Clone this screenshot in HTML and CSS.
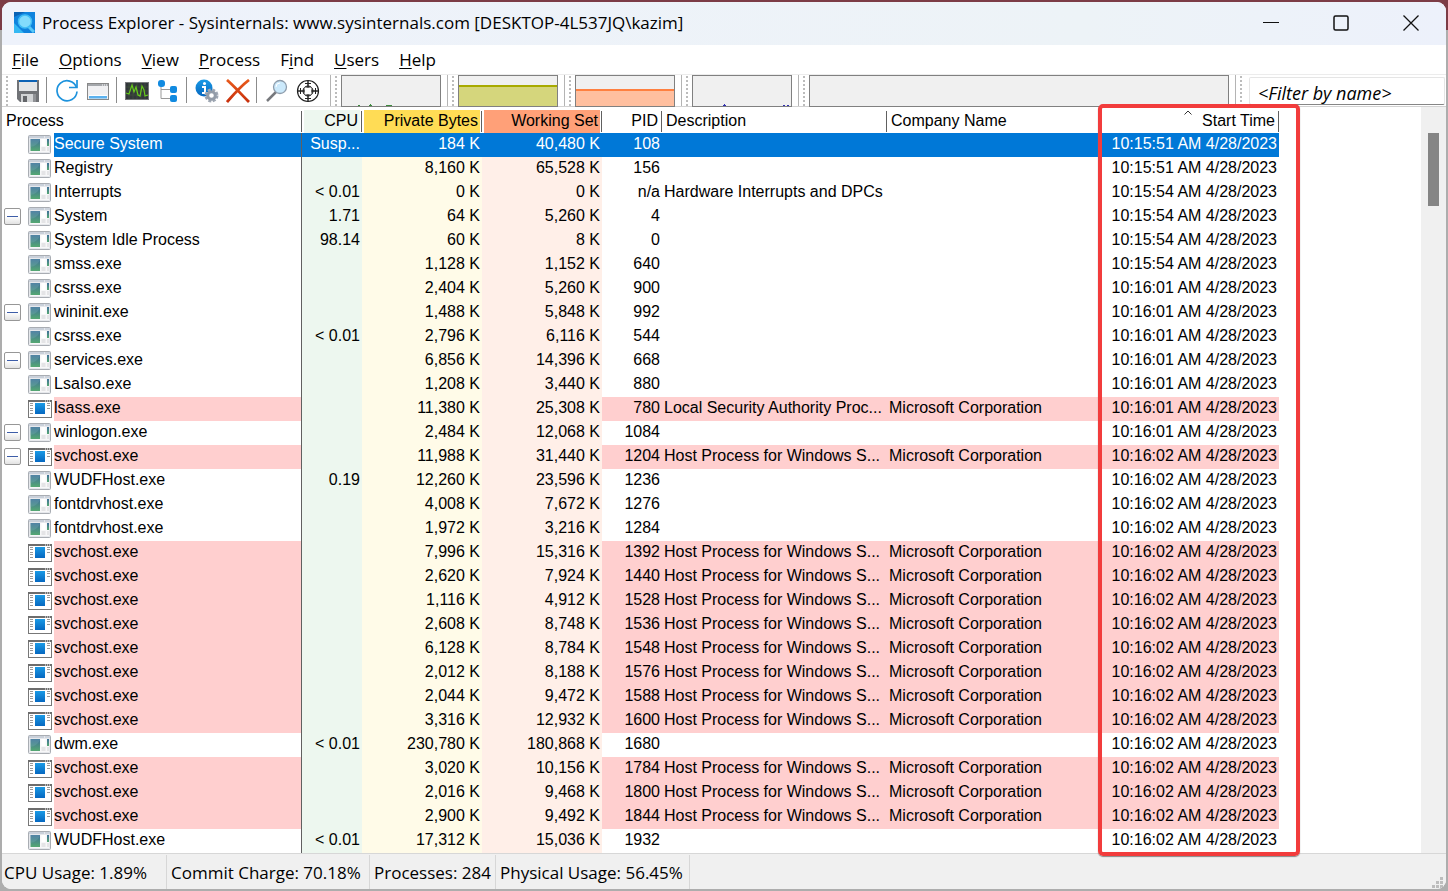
FILE: index.html
```html
<!DOCTYPE html>
<html lang="en">
<head>
<meta charset="utf-8">
<title>Process Explorer</title>
<link rel="stylesheet" href="styles.css">
</head>
<body>
<svg class="defs" aria-hidden="true">
  <defs>
    <linearGradient id="teal" x1="0" y1="0" x2="0" y2="1"><stop offset="0" stop-color="#3f6f9c"/><stop offset="1" stop-color="#55a872"/></linearGradient>
    <linearGradient id="blue" x1="0" y1="0" x2="0" y2="1"><stop offset="0" stop-color="#1a9ae6"/><stop offset="1" stop-color="#0668c0"/></linearGradient>
    <linearGradient id="red" x1="0" y1="0" x2="0" y2="1"><stop offset="0" stop-color="#e85a1c"/><stop offset="1" stop-color="#c8300c"/></linearGradient>
  </defs>
  <symbol id="app" viewBox="0 0 24 19">
    <rect x=".5" y=".5" width="22" height="18" rx="1" fill="#e6e8ec" stroke="#a9adb3"/>
    <path d="M1 2h15" stroke="#c9d0da" stroke-width="2"/><path d="M17 2h5" stroke="#b4bfce" stroke-width="1"/>
    <rect x="2" y="4" width="19" height="13" fill="#f7f7f8"/>
    <rect x="2.500" y="4" width="9.500" height="12" fill="url(#teal)"/>
    <path d="M2.500 12Q9 11 12 5V4H2.500Z" fill="#7bb0b8" opacity=".3"/>
    <rect x="13.500" y="4" width="4" height="7" fill="#fff"/><rect x="13.500" y="12" width="4" height="4" fill="#e4e4e6"/>
    <rect x="19" y="4" width="2" height="7" fill="url(#teal)"/><rect x="19" y="12" width="2" height="4" fill="#e4e4e6"/>
  </symbol>
  <symbol id="svc" viewBox="0 0 24 19">
    <rect x=".5" y="1.500" width="23" height="17" fill="#fff" stroke="#777"/>
    <path d="M0 2h24" stroke="#6d6d6d" stroke-width="2"/><path d="M17 2h1M19 2h1M21 2h1" stroke="#fff"/>
    <rect x="7" y="4" width="10" height="11" fill="url(#blue)"/>
    <path d="M2 4.500h3M2 6.500h3M2 9.500h3M2 11.500h3M2 14.500h3M19 4.500h3M19 6.500h3M19 9.500h3" stroke="#999"/>
  </symbol>
</svg>
<div class="window">
  <header class="titlebar">
    <svg class="logo" viewBox="0 0 21 21"><rect width="21" height="21" fill="#0f83dd"/><path d="M0 5 11 0H0Z" fill="#0a62b4"/><path d="M0 21V11l10 10Z" fill="#35b8f3"/><path d="m14 14 6 6" stroke="#58c8f8" stroke-width="3"/><circle cx="11" cy="9.500" r="6.500" fill="#83dcfc" stroke="#41bdf5" stroke-width="1.500"/></svg>
    <h1 class="title">Process Explorer - Sysinternals: www.sysinternals.com [DESKTOP-4L537JQ\kazim]</h1>
    <div class="controls">
      <button aria-label="Minimize"><svg viewBox="0 0 16 16"><path d="M0 7.500h16" stroke="#111"/></svg></button>
      <button aria-label="Maximize"><svg viewBox="0 0 16 16"><rect x="1" y="1" width="14" height="14" rx="1.500" fill="none" stroke="#111" stroke-width="1.500"/></svg></button>
      <button aria-label="Close"><svg viewBox="0 0 16 16"><path d="m.5.5 15 15m0-15-15 15" stroke="#111" stroke-width="1.300"/></svg></button>
    </div>
  </header>
  <nav class="menu">
    <button><u>F</u>ile</button><button><u>O</u>ptions</button><button><u>V</u>iew</button><button><u>P</u>rocess</button><button>F<u>i</u>nd</button><button><u>U</u>sers</button><button><u>H</u>elp</button>
  </nav>
  <div class="toolbar">
    <div class="band tools">
      <i class="grip"></i>
      <button aria-label="Save"><svg viewBox="0 0 24 24"><path d="M1 1h22v22H4l-3-3Z" fill="#717377"/><rect x="3" y="1" width="18" height="11" fill="#e3e5e7"/><rect x="3" y="1" width="18" height="2" fill="#0b62b5"/><path d="M5 15h15v8H5Z" fill="#d2d4d6"/><path d="M7 17h4v6H7Z" fill="#64666a"/><path d="M17 15h3v8h-3Z" fill="#909296"/></svg></button><i class="sep"></i>
      <button aria-label="Refresh"><svg viewBox="0 0 24 24"><path d="M21.500 8.500A10 10 0 1 0 22 12.500" fill="none" stroke="#1e93dd" stroke-width="1.700"/><path d="M22 1v7.500h-8" fill="none" stroke="#1e93dd" stroke-width="1.700"/></svg></button>
      <button aria-label="System information"><svg viewBox="0 0 24 24"><rect x="1.500" y="4.500" width="21" height="16" fill="#f0f0f2" stroke="#888"/><path d="M2 6h20" stroke="#a4a7ab" stroke-width="2"/><path d="M16 6h1m1 0h1m1 0h1" stroke="#fff"/><rect x="3" y="17" width="18" height="2.500" fill="#5bb1ee"/><path d="M3 16.500h18" stroke="#fff"/></svg></button><i class="sep"></i>
      <button aria-label="Process graph"><svg viewBox="0 0 24 24"><rect x=".5" y="3.500" width="23" height="17" fill="#32363b" stroke="#77797b"/><path d="M4 4v16M8 4v16M12 4v16M16 4v16M20 4v16M1 8h22M1 12h22M1 16h22" stroke="#41553a" stroke-width=".7"/><path d="m1 14 3 1 3-9 2 7 2-5 2 8 2 1 2-10 2 4 1 6 3-1" fill="none" stroke="#66c91c" stroke-width="1.200"/></svg></button>
      <button aria-label="Show process tree"><svg viewBox="0 0 24 24"><path d="M5 5v14.500h11M5 10.500h11" fill="none" stroke="#999"/><rect x="2" y="1" width="7" height="7" rx="3" fill="#118ae0"/><rect x="14" y="7" width="7" height="7" rx="2" fill="#118ae0"/><rect x="14" y="16" width="7" height="7" rx="2" fill="#118ae0"/></svg></button><i class="sep"></i>
      <button aria-label="Properties"><svg viewBox="0 0 24 24"><circle cx="9" cy="9" r="8.500" fill="url(#blue)"/><path d="M7 8h3v6M7 14h6" fill="none" stroke="#fff" stroke-width="2"/><circle cx="9.500" cy="4.500" r="1.500" fill="#fff"/><circle cx="16.500" cy="16.500" r="5" fill="none" stroke="#a0a8b4" stroke-width="4" stroke-dasharray="2.600 1.327"/><circle cx="16.500" cy="16.500" r="3.800" fill="#fff" stroke="#939ca8" stroke-width="3"/></svg></button>
      <button aria-label="Kill process"><svg viewBox="0 0 24 24"><path d="M1 1c7 6 14 14 22 22M23 1C15 7 8 15 1 23" stroke="url(#red)" stroke-width="2.800" fill="none"/></svg></button><i class="sep"></i>
      <button aria-label="Find handle"><svg viewBox="0 0 24 24"><path d="m11 13-9 9" stroke="#77797d" stroke-width="2.500"/><circle cx="15" cy="8" r="6.500" fill="#cbe9fb" stroke="#8e9dac" stroke-width="1.300"/><path d="M11 8q0-4 4-4" stroke="#fff" fill="none"/></svg></button>
      <button aria-label="Find window"><svg viewBox="0 0 24 24"><g fill="none" stroke="#222"><circle cx="12" cy="12" r="10.500" stroke-width="1.200"/><circle cx="12" cy="12" r="5" stroke-width="1"/><path d="M12 1.500v7M12 15.500v7M1.500 12h7M15.500 12h7" stroke-width="1.500"/><path d="M9 4.500h6M9.500 8h5M9 19.500h6M9.500 16h5M4.500 9v6M8 9.500v5M19.500 9v6M16 9.500v5"/></g></svg></button>
    </div>
    <div class="band"><i class="grip"></i><svg class="graph" viewBox="0 0 98 30"><path d="M16 29.500h2M27 29.500h3M28 28.500h1M44 29.500h6" stroke="#3c8a3c"/></svg></div>
    <div class="band"><i class="grip"></i><div class="graph commit"></div></div>
    <div class="band"><i class="grip"></i><div class="graph memory"></div></div>
    <div class="band"><i class="grip"></i><svg class="graph" viewBox="0 0 98 30"><path d="M30 29.500h3M31 28.500h1M90 29.500h2M94 29.500h2" stroke="#3030b0"/></svg></div>
    <div class="band wide"><i class="grip"></i><div class="graph"></div></div>
    <div class="band filter"><i class="grip"></i><input type="text" aria-label="Filter by name" placeholder="&lt;Filter by name&gt;"></div>
  </div>
  <main class="main">
    <div class="list">
      <table>
        <colgroup><col class="c-name"><col class="c-cpu"><col class="c-mem"><col class="c-mem"><col class="c-pid"><col class="c-desc"><col class="c-comp"><col class="c-start"></colgroup>
        <thead><tr><th><span>Process</span></th><th class="cpu"><span>CPU</span></th><th class="pb"><span>Private Bytes</span></th><th class="ws"><span>Working Set</span></th><th class="num"><span>PID</span></th><th><span>Description</span></th><th class="plain"><span>Company Name</span></th><th class="num sorted" aria-sort="ascending"><svg viewBox="0 0 8 5"><path d="m.5 4.500 3.500-3.500 3.500 3.500" fill="none" stroke="#333"/></svg><span>Start Time</span></th></tr></thead>
        <tbody>
<tr class="sel"><td><div class="proc"><svg><use href="#app"/></svg><span>Secure System</span></div></td><td>Susp...</td><td>184 K</td><td>40,480 K</td><td>108</td><td></td><td></td><td>10:15:51 AM 4/28/2023</td></tr>
<tr><td><div class="proc"><svg><use href="#app"/></svg><span>Registry</span></div></td><td></td><td>8,160 K</td><td>65,528 K</td><td>156</td><td></td><td></td><td>10:15:51 AM 4/28/2023</td></tr>
<tr><td><div class="proc"><svg><use href="#app"/></svg><span>Interrupts</span></div></td><td>&lt; 0.01</td><td>0 K</td><td>0 K</td><td>n/a</td><td>Hardware Interrupts and DPCs</td><td></td><td>10:15:54 AM 4/28/2023</td></tr>
<tr><td><div class="proc"><button aria-label="Collapse"></button><svg><use href="#app"/></svg><span>System</span></div></td><td>1.71</td><td>64 K</td><td>5,260 K</td><td>4</td><td></td><td></td><td>10:15:54 AM 4/28/2023</td></tr>
<tr><td><div class="proc"><svg><use href="#app"/></svg><span>System Idle Process</span></div></td><td>98.14</td><td>60 K</td><td>8 K</td><td>0</td><td></td><td></td><td>10:15:54 AM 4/28/2023</td></tr>
<tr><td><div class="proc"><svg><use href="#app"/></svg><span>smss.exe</span></div></td><td></td><td>1,128 K</td><td>1,152 K</td><td>640</td><td></td><td></td><td>10:15:54 AM 4/28/2023</td></tr>
<tr><td><div class="proc"><svg><use href="#app"/></svg><span>csrss.exe</span></div></td><td></td><td>2,404 K</td><td>5,260 K</td><td>900</td><td></td><td></td><td>10:16:01 AM 4/28/2023</td></tr>
<tr><td><div class="proc"><button aria-label="Collapse"></button><svg><use href="#app"/></svg><span>wininit.exe</span></div></td><td></td><td>1,488 K</td><td>5,848 K</td><td>992</td><td></td><td></td><td>10:16:01 AM 4/28/2023</td></tr>
<tr><td><div class="proc"><svg><use href="#app"/></svg><span>csrss.exe</span></div></td><td>&lt; 0.01</td><td>2,796 K</td><td>6,116 K</td><td>544</td><td></td><td></td><td>10:16:01 AM 4/28/2023</td></tr>
<tr><td><div class="proc"><button aria-label="Collapse"></button><svg><use href="#app"/></svg><span>services.exe</span></div></td><td></td><td>6,856 K</td><td>14,396 K</td><td>668</td><td></td><td></td><td>10:16:01 AM 4/28/2023</td></tr>
<tr><td><div class="proc"><svg><use href="#app"/></svg><span>LsaIso.exe</span></div></td><td></td><td>1,208 K</td><td>3,440 K</td><td>880</td><td></td><td></td><td>10:16:01 AM 4/28/2023</td></tr>
<tr class="svc"><td><div class="proc"><svg><use href="#svc"/></svg><span>lsass.exe</span></div></td><td></td><td>11,380 K</td><td>25,308 K</td><td>780</td><td>Local Security Authority Proc...</td><td>Microsoft Corporation</td><td>10:16:01 AM 4/28/2023</td></tr>
<tr><td><div class="proc"><button aria-label="Collapse"></button><svg><use href="#app"/></svg><span>winlogon.exe</span></div></td><td></td><td>2,484 K</td><td>12,068 K</td><td>1084</td><td></td><td></td><td>10:16:01 AM 4/28/2023</td></tr>
<tr class="svc"><td><div class="proc"><button aria-label="Collapse"></button><svg><use href="#svc"/></svg><span>svchost.exe</span></div></td><td></td><td>11,988 K</td><td>31,440 K</td><td>1204</td><td>Host Process for Windows S...</td><td>Microsoft Corporation</td><td>10:16:02 AM 4/28/2023</td></tr>
<tr><td><div class="proc"><svg><use href="#app"/></svg><span>WUDFHost.exe</span></div></td><td>0.19</td><td>12,260 K</td><td>23,596 K</td><td>1236</td><td></td><td></td><td>10:16:02 AM 4/28/2023</td></tr>
<tr><td><div class="proc"><svg><use href="#app"/></svg><span>fontdrvhost.exe</span></div></td><td></td><td>4,008 K</td><td>7,672 K</td><td>1276</td><td></td><td></td><td>10:16:02 AM 4/28/2023</td></tr>
<tr><td><div class="proc"><svg><use href="#app"/></svg><span>fontdrvhost.exe</span></div></td><td></td><td>1,972 K</td><td>3,216 K</td><td>1284</td><td></td><td></td><td>10:16:02 AM 4/28/2023</td></tr>
<tr class="svc"><td><div class="proc"><svg><use href="#svc"/></svg><span>svchost.exe</span></div></td><td></td><td>7,996 K</td><td>15,316 K</td><td>1392</td><td>Host Process for Windows S...</td><td>Microsoft Corporation</td><td>10:16:02 AM 4/28/2023</td></tr>
<tr class="svc"><td><div class="proc"><svg><use href="#svc"/></svg><span>svchost.exe</span></div></td><td></td><td>2,620 K</td><td>7,924 K</td><td>1440</td><td>Host Process for Windows S...</td><td>Microsoft Corporation</td><td>10:16:02 AM 4/28/2023</td></tr>
<tr class="svc"><td><div class="proc"><svg><use href="#svc"/></svg><span>svchost.exe</span></div></td><td></td><td>1,116 K</td><td>4,912 K</td><td>1528</td><td>Host Process for Windows S...</td><td>Microsoft Corporation</td><td>10:16:02 AM 4/28/2023</td></tr>
<tr class="svc"><td><div class="proc"><svg><use href="#svc"/></svg><span>svchost.exe</span></div></td><td></td><td>2,608 K</td><td>8,748 K</td><td>1536</td><td>Host Process for Windows S...</td><td>Microsoft Corporation</td><td>10:16:02 AM 4/28/2023</td></tr>
<tr class="svc"><td><div class="proc"><svg><use href="#svc"/></svg><span>svchost.exe</span></div></td><td></td><td>6,128 K</td><td>8,784 K</td><td>1548</td><td>Host Process for Windows S...</td><td>Microsoft Corporation</td><td>10:16:02 AM 4/28/2023</td></tr>
<tr class="svc"><td><div class="proc"><svg><use href="#svc"/></svg><span>svchost.exe</span></div></td><td></td><td>2,012 K</td><td>8,188 K</td><td>1576</td><td>Host Process for Windows S...</td><td>Microsoft Corporation</td><td>10:16:02 AM 4/28/2023</td></tr>
<tr class="svc"><td><div class="proc"><svg><use href="#svc"/></svg><span>svchost.exe</span></div></td><td></td><td>2,044 K</td><td>9,472 K</td><td>1588</td><td>Host Process for Windows S...</td><td>Microsoft Corporation</td><td>10:16:02 AM 4/28/2023</td></tr>
<tr class="svc"><td><div class="proc"><svg><use href="#svc"/></svg><span>svchost.exe</span></div></td><td></td><td>3,316 K</td><td>12,932 K</td><td>1600</td><td>Host Process for Windows S...</td><td>Microsoft Corporation</td><td>10:16:02 AM 4/28/2023</td></tr>
<tr><td><div class="proc"><svg><use href="#app"/></svg><span>dwm.exe</span></div></td><td>&lt; 0.01</td><td>230,780 K</td><td>180,868 K</td><td>1680</td><td></td><td></td><td>10:16:02 AM 4/28/2023</td></tr>
<tr class="svc"><td><div class="proc"><svg><use href="#svc"/></svg><span>svchost.exe</span></div></td><td></td><td>3,020 K</td><td>10,156 K</td><td>1784</td><td>Host Process for Windows S...</td><td>Microsoft Corporation</td><td>10:16:02 AM 4/28/2023</td></tr>
<tr class="svc"><td><div class="proc"><svg><use href="#svc"/></svg><span>svchost.exe</span></div></td><td></td><td>2,016 K</td><td>9,468 K</td><td>1800</td><td>Host Process for Windows S...</td><td>Microsoft Corporation</td><td>10:16:02 AM 4/28/2023</td></tr>
<tr class="svc"><td><div class="proc"><svg><use href="#svc"/></svg><span>svchost.exe</span></div></td><td></td><td>2,900 K</td><td>9,492 K</td><td>1844</td><td>Host Process for Windows S...</td><td>Microsoft Corporation</td><td>10:16:02 AM 4/28/2023</td></tr>
<tr><td><div class="proc"><svg><use href="#app"/></svg><span>WUDFHost.exe</span></div></td><td>&lt; 0.01</td><td>17,312 K</td><td>15,036 K</td><td>1932</td><td></td><td></td><td>10:16:02 AM 4/28/2023</td></tr>
        </tbody>
      </table>
    </div>
    <div class="scrollbar"><div class="thumb"></div></div>
    <div class="highlight"></div>
  </main>
  <footer class="status">
    <span class="s-cpu">CPU Usage: 1.89%</span><span class="s-commit">Commit Charge: 70.18%</span><span class="s-proc">Processes: 284</span><span class="s-phys">Physical Usage: 56.45%</span>
    <svg class="resize" viewBox="0 0 12 12"><path d="M8 0h3v3H8zM4 4h3v3H4zM8 4h3v3H8zM0 8h3v3H0zM4 8h3v3H4zM8 8h3v3H8z" fill="#bdbdbd"/></svg>
  </footer>
</div>
</body>
</html>
```
FILE: styles.css
```css
* { box-sizing: border-box; }
body {
  margin: 0;
  height: 100vh;
  padding: 2px;
  background: linear-gradient(#7c3c46 30px, #adadad 30px);
  font: 17px/24px "Open Sans", "Noto Sans", sans-serif;
  color: #000;
}
button { padding: 0; border: 0; background: none; font: inherit; color: inherit; }
svg { display: block; flex: none; }
.defs { position: absolute; width: 0; height: 0; }
.window {
  display: flex;
  flex-direction: column;
  height: 100%;
  background: #fff;
  border-radius: 9px;
  overflow: hidden;
}
.titlebar {
  display: flex;
  align-items: center;
  height: 43px;
  flex: none;
  padding: 0 0 2px 12px;
  background: linear-gradient(90deg, #eef2fb, #edf3f7 75%, #edf1fb);
}
.logo { width: 21px; height: 21px; }
.title { margin: 0 auto 0 7px; font: inherit; white-space: nowrap; }
.controls { display: flex; }
.controls button { display: grid; place-items: center; width: 70px; height: 40px; }
.controls svg { width: 16px; height: 16px; }
.menu { display: flex; gap: 20px; height: 29px; flex: none; padding: 3px 10px 2px; }
.menu u { text-underline-offset: 2px; text-decoration-thickness: 1px; }

.toolbar {
  display: flex;
  height: 33px;
  flex: none;
  border-top: 1px solid #ececec;
  border-bottom: 1px solid #d2d2d2;
}
.band { display: flex; flex: none; padding: 0 6px 0 4px; border-right: 1px solid #b4b4b4; }
.band + .band { width: 117px; }
.grip {
  flex: none;
  width: 2px;
  margin: 1px 4px 0 0;
  background: repeating-linear-gradient(#bcbcbc 0 2px, transparent 2px 4px);
}
.tools { width: 329px; }
.tools button { display: grid; place-items: center; flex: none; width: 31px; height: 31px; }
.tools svg { width: 24px; height: 24px; }
.sep { flex: none; width: 1px; height: 26px; margin: 2px 4px 0 3px; background: #8c8c8c; }
.graph { flex: 1; height: 32px; border: 1px solid #808080; background: #f0f0f0; }
.commit { background: linear-gradient(#f0f0f0 9px, #a8aa00 9px 11px, #d5d67c 11px); }
.memory { background: linear-gradient(#f0f0f0 13px, #ff8040 13px 15px, #ffbf9f 15px); }
.toolbar .wide { flex: 1; }
.toolbar .filter { width: 210px; padding: 0 1px 0 4px; border: 0; }
.filter input {
  flex: 1;
  min-width: 0;
  height: 28px;
  margin: 2px 0 0 3px;
  padding: 3px 8px 0;
  border: 1px solid #e5e5e5;
  border-bottom-color: #868686;
  border-radius: 2px;
  outline: 0;
  font: italic 18px/24px "Open Sans", "Noto Sans", sans-serif;
}
.filter input::placeholder { color: #000; opacity: 1; }

.main { position: relative; display: flex; flex: 1; min-height: 0; font: 16px/22px "Liberation Sans", Arial, sans-serif; }
.list { flex: 1; min-width: 0; overflow: hidden; }
table { width: 1277px; table-layout: fixed; border-collapse: separate; border-spacing: 0; }
.c-name { width: 300px; }
.c-cpu, .c-pid { width: 60px; }
.c-mem { width: 120px; }
.c-desc { width: 225px; }
.c-comp { width: 212px; }
.c-start { width: 180px; }
th { position: relative; height: 26px; padding: 3px 2px 0; font-weight: 400; text-align: left; vertical-align: top; }
th span { display: block; height: 23px; padding: 0 2px; }
th::after { content: ""; position: absolute; top: 4px; right: 0; bottom: 1px; width: 1px; background: #606060; }
.plain::after { display: none; }
.cpu, .pb, .ws, .num { text-align: right; }
.cpu span { background: #edf7ef; }
.pb span { background: #ffdc55; }
.ws span { background: #ffa078; }
.sorted svg { position: absolute; top: 3px; left: 85px; width: 8px; height: 5px; }
td { height: 24px; padding: 0 2px; text-align: right; vertical-align: top; white-space: nowrap; overflow: hidden; }
td:nth-child(1) { padding: 0; border-right: 1px solid #606060; }
td:nth-child(2) { background: #edf7ef; }
td:nth-child(3) { background: #fffbe8; }
td:nth-child(4) { background: #ffefe8; }
td:nth-child(6), td:nth-child(7) { text-align: left; }
.proc { display: flex; justify-content: flex-end; height: 24px; text-align: left; }
.proc svg { width: 24px; height: 19px; margin: 2px 2px 0 0; }
.proc span { width: 247px; }
.proc button {
  width: 17px;
  height: 17px;
  margin: 3px 7px 0 0;
  border: 1px solid #979797;
  border-radius: 2px;
  background: linear-gradient(#3d5da8, #3d5da8) center / 11px 1px no-repeat, linear-gradient(#fff 50%, #e2e2e2);
}
.svc .proc span, .svc td:nth-child(n+5) { background: #ffcfcf; }
.sel { color: #fff; }
.sel .proc span, .sel td:nth-child(n+2) { background: #0078d7; }
.scrollbar { flex: none; width: 25px; padding: 26px 7px 0; background: #f0f0f0; }
.thumb { height: 73px; background: #858585; }
.highlight {
  position: absolute;
  top: -3px;
  bottom: -3px;
  left: 1096px;
  width: 202px;
  border: 4px solid #f23c3c;
  border-radius: 5px;
  box-shadow: 0 1px 1px #888;
}
.status { display: flex; height: 36px; flex: none; padding-right: 2px; border-top: 1px solid #d7d7d7; background: #f0f0f0; }
.status span { padding: 6px 0 0 2px; margin-top: 1px; border-right: 1px solid #d7d7d7; white-space: nowrap; }
.s-cpu { width: 165px; }
.s-commit { width: 203px; }
.s-proc { width: 126px; }
.s-phys { width: 194px; }
.status span + span { padding-left: 4px; }
.resize { width: 12px; height: 12px; margin: auto 0 0 auto; }
```
